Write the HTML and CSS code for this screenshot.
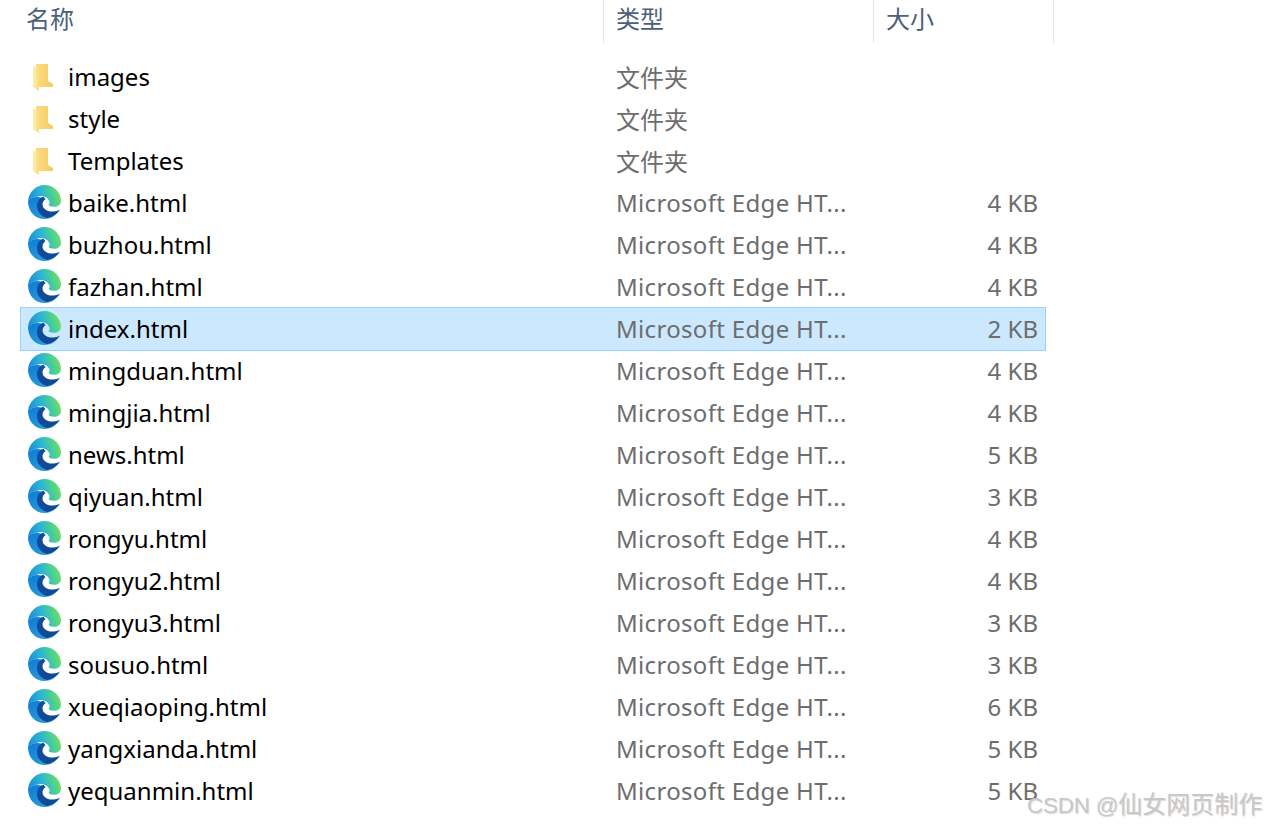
FILE: index.html
```html
<!DOCTYPE html>
<html lang="zh">
<head>
<meta charset="utf-8">
<title>文件列表</title>
<link rel="stylesheet" href="styles.css">
</head>
<body>
<svg class="defs" width="0" height="0" aria-hidden="true">
  <defs>
    <linearGradient id="fo" x1="0" y1="0" x2="1" y2="0">
      <stop offset="0" stop-color="#fbdb84"/><stop offset="1" stop-color="#f5cb5e"/>
    </linearGradient>
    <linearGradient id="ff" x1="0" y1="0" x2="1" y2="0">
      <stop offset="0" stop-color="#ffeeb0"/><stop offset="1" stop-color="#fbd97c"/>
    </linearGradient>
    <linearGradient id="et" x1="0" y1="0.7" x2="1" y2="0.5">
      <stop offset="0" stop-color="#1a8ad8"/><stop offset="0.45" stop-color="#2cb4d6"/><stop offset="0.8" stop-color="#4fd38c"/><stop offset="1" stop-color="#72de5c"/>
    </linearGradient>
    <linearGradient id="eb" x1="0" y1="0" x2="0.7" y2="1">
      <stop offset="0" stop-color="#0f7ad2"/><stop offset="1" stop-color="#2a9fe0"/>
    </linearGradient>
    <linearGradient id="ed" x1="0" y1="0" x2="1" y2="1">
      <stop offset="0" stop-color="#0d4fa0"/><stop offset="1" stop-color="#14458e"/>
    </linearGradient>
    <symbol id="folder" viewBox="0 0 20 27">
      <path fill="url(#fo)" d="M3 0H15V17L20 20V23H6L3 20Z"/>
      <path fill="url(#ff)" d="M0 2L6 5V27L0 23Z"/>
    </symbol>
    <symbol id="edge" viewBox="0 0 32 32" preserveAspectRatio="none">
      <path fill="url(#eb)" d="M0 15C0 25 7 32 16 32C23 32 28 28 31 23C27 25.500 22 26 18 25C12 23 10 17 14 12C8 10 2 12 0 15Z"/>
      <path fill="url(#ed)" d="M15 11C10 12.500 8 17 9 22C10 27 15 30.500 19 31C24 30 28 27 30.500 23.500C26 25.500 21 25.500 17.500 23.500C13 21 13 16 17 13.500Z"/>
      <path fill="url(#et)" d="M0 15C1 6 8 0 16 0C25 0 32 7 32 15C32 18.500 29 20.500 25 20.500C22.500 20.500 20 19.800 20 18.700C21 17.500 21.500 16 20 14C18 11 14 10 11 10.500C6 11 2 13 0 15Z"/>
    </symbol>
  </defs>
</svg>

<main class="list">
  <header class="head">
    <div class="hcell hname">名称</div>
    <div class="hcell htype">类型</div>
    <div class="hcell hsize">大小</div>
  </header>
  <div class="rows">
    <div class="row"><svg class="ico-folder"><use href="#folder"/></svg><span class="name">images</span><span class="type cjk">文件夹</span><span class="size"></span></div>
    <div class="row"><svg class="ico-folder"><use href="#folder"/></svg><span class="name">style</span><span class="type cjk">文件夹</span><span class="size"></span></div>
    <div class="row"><svg class="ico-folder"><use href="#folder"/></svg><span class="name">Templates</span><span class="type cjk">文件夹</span><span class="size"></span></div>
    <div class="row"><svg class="ico-edge"><use href="#edge"/></svg><span class="name">baike.html</span><span class="type">Microsoft Edge HT...</span><span class="size">4 KB</span></div>
    <div class="row"><svg class="ico-edge"><use href="#edge"/></svg><span class="name">buzhou.html</span><span class="type">Microsoft Edge HT...</span><span class="size">4 KB</span></div>
    <div class="row"><svg class="ico-edge"><use href="#edge"/></svg><span class="name">fazhan.html</span><span class="type">Microsoft Edge HT...</span><span class="size">4 KB</span></div>
    <div class="row selected"><svg class="ico-edge"><use href="#edge"/></svg><span class="name">index.html</span><span class="type">Microsoft Edge HT...</span><span class="size">2 KB</span></div>
    <div class="row"><svg class="ico-edge"><use href="#edge"/></svg><span class="name">mingduan.html</span><span class="type">Microsoft Edge HT...</span><span class="size">4 KB</span></div>
    <div class="row"><svg class="ico-edge"><use href="#edge"/></svg><span class="name">mingjia.html</span><span class="type">Microsoft Edge HT...</span><span class="size">4 KB</span></div>
    <div class="row"><svg class="ico-edge"><use href="#edge"/></svg><span class="name">news.html</span><span class="type">Microsoft Edge HT...</span><span class="size">5 KB</span></div>
    <div class="row"><svg class="ico-edge"><use href="#edge"/></svg><span class="name">qiyuan.html</span><span class="type">Microsoft Edge HT...</span><span class="size">3 KB</span></div>
    <div class="row"><svg class="ico-edge"><use href="#edge"/></svg><span class="name">rongyu.html</span><span class="type">Microsoft Edge HT...</span><span class="size">4 KB</span></div>
    <div class="row"><svg class="ico-edge"><use href="#edge"/></svg><span class="name">rongyu2.html</span><span class="type">Microsoft Edge HT...</span><span class="size">4 KB</span></div>
    <div class="row"><svg class="ico-edge"><use href="#edge"/></svg><span class="name">rongyu3.html</span><span class="type">Microsoft Edge HT...</span><span class="size">3 KB</span></div>
    <div class="row"><svg class="ico-edge"><use href="#edge"/></svg><span class="name">sousuo.html</span><span class="type">Microsoft Edge HT...</span><span class="size">3 KB</span></div>
    <div class="row"><svg class="ico-edge"><use href="#edge"/></svg><span class="name">xueqiaoping.html</span><span class="type">Microsoft Edge HT...</span><span class="size">6 KB</span></div>
    <div class="row"><svg class="ico-edge"><use href="#edge"/></svg><span class="name">yangxianda.html</span><span class="type">Microsoft Edge HT...</span><span class="size">5 KB</span></div>
    <div class="row"><svg class="ico-edge"><use href="#edge"/></svg><span class="name">yequanmin.html</span><span class="type">Microsoft Edge HT...</span><span class="size">5 KB</span></div>
  </div>
</main>
<div class="watermark"><span class="wm-latin">CSDN @</span>仙女网页制作</div>
</body>
</html>
```

FILE: styles.css
```css
html, body {
  margin: 0;
  height: 827px;
  overflow: hidden;
  background: #fff;
}
body {
  position: relative;
  font-family: "Noto Sans", "Noto Sans CJK SC", sans-serif;
  font-size: 24px;
  color: #000;
}
.defs { display: block; height: 0; }
.head {
  display: grid;
  grid-template-columns: 604px 270px 180px;
  width: 1054px;
  height: 43px;
}
.hcell {
  box-sizing: border-box;
  padding-left: 12px;
  border-right: 1px solid #e5e5e5;
  color: #4c607a;
  font-family: "Noto Sans CJK SC", sans-serif;
  line-height: 35px;
}
.hname { padding-left: 26px; }
.rows {
  display: flex;
  flex-direction: column;
  margin: 13px 0 0 20px;
  width: 1026px;
}
.row {
  box-sizing: border-box;
  flex: none;
  height: 42px;
  display: flex;
  align-items: center;
  border: 1px solid transparent;
  line-height: 40px;
  white-space: nowrap;
}
.row.selected {
  height: 44px;
  margin: -1px 0;
  background: #cce8ff;
  border-color: #99d1ff;
}
.ico-folder {
  flex: none;
  width: 20px;
  height: 27px;
  margin: 0 15px 0 12px;
}
.ico-edge {
  flex: none;
  width: 33px;
  height: 34px;
  margin: -2px 7px 0 7px;
}
.name { flex: none; width: 548px; }
.type {
  flex: none;
  width: 340px;
  color: #6d6d6d;
  letter-spacing: 0.32px;
}
.type.cjk {
  letter-spacing: 0;
  padding-top: 2px;
}
.size {
  flex: none;
  width: 82px;
  text-align: right;
  color: #6d6d6d;
}
.watermark {
  position: absolute;
  left: 1027px;
  top: 788px;
  font-family: "Liberation Sans", "Noto Sans CJK SC", sans-serif;
  font-size: 24px;
  line-height: 34px;
  white-space: nowrap;
  color: #c8c8c8;
  text-shadow: 1px 1px 1px rgba(0, 0, 0, 0.15);
}
.wm-latin { font-size: 22.4px; letter-spacing: -0.2px; }
```
